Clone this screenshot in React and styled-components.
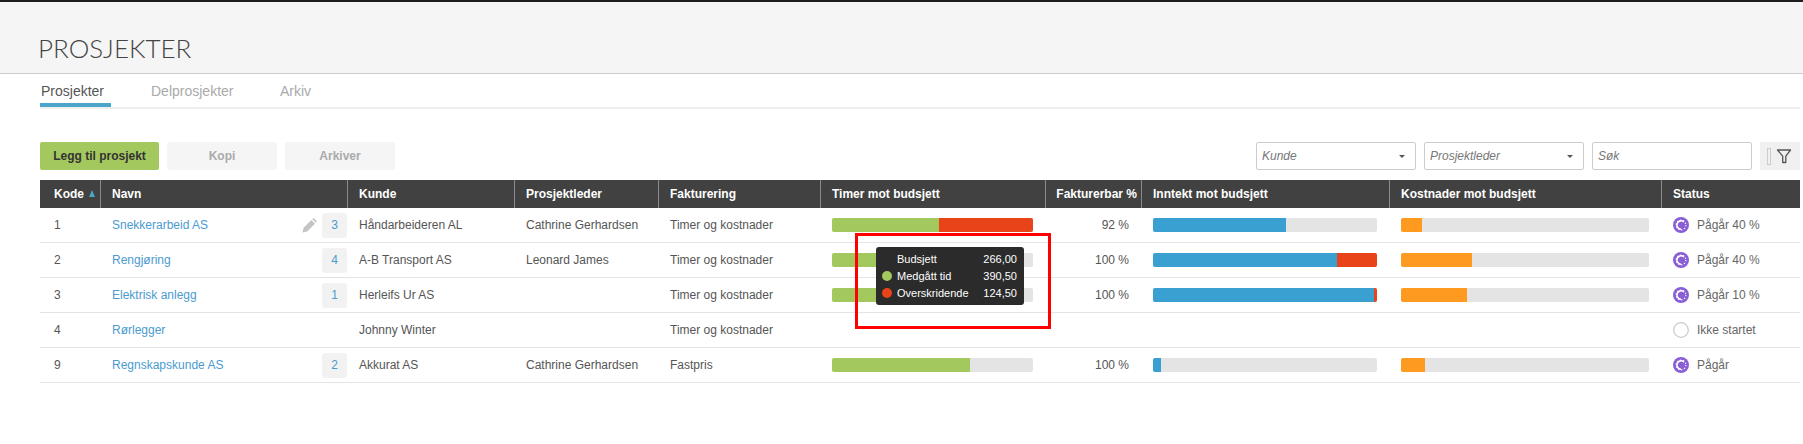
import React from "react";
import styled, { createGlobalStyle } from "styled-components";

const Global = createGlobalStyle`
  html, body { margin: 0; padding: 0; background: #fff; }
  body { font-family: "Liberation Sans", Arial, sans-serif; font-size: 12px; color: #555; overflow: hidden; }
`;
const Page = styled.div`position: relative; width: 1803px; height: 444px; overflow: hidden;`;
const TopBar = styled.div`height: 2px; background: #1e1e1e;`;
const Hero = styled.header`
  height: 71px; background: #f5f5f5; border-bottom: 1px solid #ccc;
  padding-left: 38px; display: flex; align-items: flex-end;
`;
const Title = styled.h1`
  margin: 0 0 10px; font: 300 26px/30px Lato, sans-serif; color: #444;
`;
const Body = styled.main`padding: 0 3px 0 40px;`;
const Tabs = styled.nav`
  display: flex; gap: 39px; height: 33px; border-bottom: 2px solid #eee;
`;
const Tab = styled.a`
  padding: 9px 1px 0; width: ${p => p.$w}px; box-sizing: border-box; height: 33px; font-size: 14px; line-height: 17px;
  color: ${p => p.$active ? "#555" : "#aaa"};
  border-bottom: ${p => p.$active ? "4px solid #4ba6c9" : "0"};
`;
const Toolbar = styled.div`display: flex; align-items: flex-start; margin-top: 33px; height: 28px;`;
const Btn = styled.button`
  width: ${p => p.$w}px; height: 28px; margin-right: 8px; border: 0; border-radius: 2px; padding: 0;
  background: ${p => p.$primary ? "#a3c95e" : "#f5f5f5"}; color: ${p => p.$primary ? "#333" : "#aaa"};
  font: bold 12px "Liberation Sans", sans-serif;
`;
const Filters = styled.div`margin-left: auto; display: flex; gap: 8px;`;
const Field = styled.div`
  width: 160px; height: 28px; box-sizing: border-box; border: 1px solid #ccc; border-radius: 2px; background: #fff;
  padding: 0 6px 0 5px; display: flex; align-items: center; justify-content: space-between;
  font: italic 12px "Liberation Sans", sans-serif; color: #777;
`;
const Caret = styled.span`
  width: 0; height: 0; border: 3px solid transparent; border-top: 3px solid #555; border-bottom: 0; margin-right: 4px;
`;
const FilterBtn = styled.div`
  width: 40px; height: 28px; background: #f0f0f0; border-radius: 2px; display: flex; align-items: center; padding-left: 7px; box-sizing: border-box; gap: 5px; color: #555;
`;
const Tick = styled.span`width: 2px; height: 15px; border: 1px solid #ccc; box-sizing: content-box;`;
const Table = styled.table`
  margin-top: 10px; border-collapse: separate; border-spacing: 0; table-layout: fixed; width: 1760px;
`;
const Th = styled.th`
  height: 28px; padding: 0 ${p => p.$right ? "4px" : "4px"} 0 ${p => p.$pad ?? 11}px; background: #414141; color: #fff; font-size: 12px; font-weight: bold; white-space: nowrap;
  text-align: ${p => p.$right ? "right" : "left"}; box-sizing: border-box;
  & + & { border-left: 1px solid #8a8a8a; }
`;
const Sort = styled.span`
  display: inline-block; width: 0; height: 0; margin-left: 5px; vertical-align: 1px;
  border-left: 3.5px solid transparent; border-right: 3.5px solid transparent; border-bottom: 7px solid #4ba6c9;
`;
const Tr = styled.tr`height: 35px;`;
const Td = styled.td`
  height: 35px; padding: 0 ${p => p.$right ? "12px" : "0"} 0 ${p => p.$pad ?? 12}px; font-size: 12px; color: #555; box-sizing: border-box; white-space: nowrap;
  border-bottom: 1px solid #e4e4e4;
  text-align: ${p => p.$right ? "right" : "left"};
`;
const NameCell = styled.div`display: flex; align-items: center; justify-content: space-between; height: 34px;`;
const Link = styled.a`color: #4a9bd0;`;
const Tools = styled.div`display: flex; align-items: center; gap: 5px;`;
const Count = styled.span`
  width: 25px; height: 25px; border-radius: 3px; background: #f2f2f2; color: #4a9bd0; font-size: 12px;
  display: flex; align-items: center; justify-content: center;
`;
const Bar = styled.div`
  width: ${p => p.$w}px; height: 14px; background: #e4e4e4; border-radius: 2px; overflow: hidden; display: flex;
`;
const Seg = styled.span`display: block; height: 100%; background: ${p => p.$c};`;
const Status = styled.div`display: flex; align-items: center; gap: 8px; color: #666;`;
const Tooltip = styled.div`
  position: absolute; left: 876px; top: 247px; width: 148px; height: 58px; box-sizing: border-box; background: #2b2b2b; border-radius: 3px;
  padding: 3px 7px 3px 6px; display: grid; grid-template-columns: 10px 1fr auto; grid-auto-rows: 17px; align-content: center; column-gap: 5px; align-items: center; color: #fff; font-size: 11px; line-height: 17px;
`;
const Dot = styled.span`width: 10px; height: 10px; border-radius: 50%; background: ${p => p.$c || "transparent"};`;
const Mark = styled.div`
  position: absolute; left: 855px; top: 233px; width: 196px; height: 96px; box-sizing: border-box; border: 3px solid #f00; pointer-events: none;
`;

const Pencil = () => (
  <svg width="15" height="15" viewBox="0 0 16 16"><path d="M.5 15.5l1.2-5L10 2.2l3.8 3.8-8.300 8.300z M11 1.200l.7-.6c.5-.4 1-.4 1.500.1l2.100 2.100c.5.5.5 1 .1 1.500l-.6.7z" fill="#c4c4c4"/></svg>
);
const Funnel = () => (
  <svg width="16" height="16" viewBox="0 0 16 16" fill="none" stroke="#555" strokeWidth="1.3"><path d="M1.5 2h13L9.800 8.200V14.500H6.700V8.200z" strokeLinejoin="round"/></svg>
);
const StatusIcon = ({ on }) => on ? (
  <svg width="16" height="16" viewBox="0 0 16 16">
    <circle cx="8" cy="8" r="8" fill="#8a5fd6"/>
    <circle cx="8" cy="8" r="4.800" fill="none" stroke="#fff" strokeWidth="1.200" strokeDasharray="1.200 1.800"/>
    <path d="M11 5A4.200 4.200 0 1 0 8 12.200" fill="none" stroke="#fff" strokeWidth="1.600"/>
  </svg>
) : (
  <svg width="16" height="16" viewBox="0 0 16 16"><circle cx="8" cy="8" r="7.300" fill="none" stroke="#ccc" strokeWidth="1.300"/></svg>
);

const G = "#a3c95e", R = "#e9431a", B = "#3a9fd1", O = "#ff9a20";
const rows = [
  { id: 1, name: "Snekkerarbeid AS", edit: true, n: 3, kunde: "Håndarbeideren AL", pl: "Cathrine Gerhardsen", t: [[G,107],[R,94]], f: "92 %", i: [[B,133]], k: [[O,21]], s: "Pågår 40 %", on: true },
  { id: 2, name: "Rengjøring", n: 4, kunde: "A-B Transport AS", pl: "Leonard James", t: [[G,140]], f: "100 %", i: [[B,184],[R,40]], k: [[O,71]], s: "Pågår 40 %", on: true },
  { id: 3, name: "Elektrisk anlegg", n: 1, kunde: "Herleifs Ur AS", pl: "", t: [[G,140]], f: "100 %", i: [[B,221],[R,3]], k: [[O,66]], s: "Pågår 10 %", on: true },
  { id: 4, name: "Rørlegger", kunde: "Johnny Winter", pl: "", s: "Ikke startet" },
  { id: 9, name: "Regnskapskunde AS", n: 2, kunde: "Akkurat AS", pl: "Cathrine Gerhardsen", fakt: "Fastpris", t: [[G,138]], f: "100 %", i: [[B,8]], k: [[O,24]], s: "Pågår", on: true },
];
const widths = [60, 247, 167, 144, 162, 225, 96, 248, 272, 139];
const Segs = ({ w, d }) => d ? <Bar $w={w}>{d.map(([c, x], i) => <Seg key={i} $c={c} style={{ width: x }} />)}</Bar> : null;

export default function App() {
  return (
    <Page>
      <Global />
      <TopBar />
      <Hero><Title>PROSJEKTER</Title></Hero>
      <Body>
        <Tabs>
          <Tab $active $w={71}>Prosjekter</Tab>
          <Tab $w={90}>Delprosjekter</Tab>
          <Tab $w={40}>Arkiv</Tab>
        </Tabs>
        <Toolbar>
          <Btn $primary $w={119}>Legg til prosjekt</Btn>
          <Btn $w={110}>Kopi</Btn>
          <Btn $w={110}>Arkiver</Btn>
          <Filters>
            <Field>Kunde<Caret /></Field>
            <Field>Prosjektleder<Caret /></Field>
            <Field>Søk</Field>
            <FilterBtn><Tick /><Funnel /></FilterBtn>
          </Filters>
        </Toolbar>
        <Table>
          <colgroup>{widths.map((w, i) => <col key={i} style={{ width: w }} />)}</colgroup>
          <thead>
            <tr>
              <Th $pad={14}>Kode<Sort /></Th><Th>Navn</Th><Th>Kunde</Th><Th>Prosjektleder</Th><Th>Fakturering</Th>
              <Th>Timer mot budsjett</Th><Th $right $pad={3}>Fakturerbar %</Th><Th>Inntekt mot budsjett</Th><Th>Kostnader mot budsjett</Th><Th>Status</Th>
            </tr>
          </thead>
          <tbody>
            {rows.map(r => (
              <Tr key={r.id}>
                <Td $pad={14}>{r.id}</Td>
                <Td>
                  <NameCell>
                    <Link>{r.name}</Link>
                    <Tools>{r.edit && <Pencil />}{r.n && <Count>{r.n}</Count>}</Tools>
                  </NameCell>
                </Td>
                <Td>{r.kunde}</Td>
                <Td>{r.pl}</Td>
                <Td>{r.fakt || "Timer og kostnader"}</Td>
                <Td><Segs w={201} d={r.t} /></Td>
                <Td $right>{r.f}</Td>
                <Td><Segs w={224} d={r.i} /></Td>
                <Td><Segs w={248} d={r.k} /></Td>
                <Td><Status><StatusIcon on={r.on} />{r.s}</Status></Td>
              </Tr>
            ))}
          </tbody>
        </Table>
      </Body>
      <Tooltip>
        <Dot /><span>Budsjett</span><span>266,00</span>
        <Dot $c={G} /><span>Medgått tid</span><span>390,50</span>
        <Dot $c={R} /><span>Overskridende</span><span>124,50</span>
      </Tooltip>
      <Mark />
    </Page>
  );
}
